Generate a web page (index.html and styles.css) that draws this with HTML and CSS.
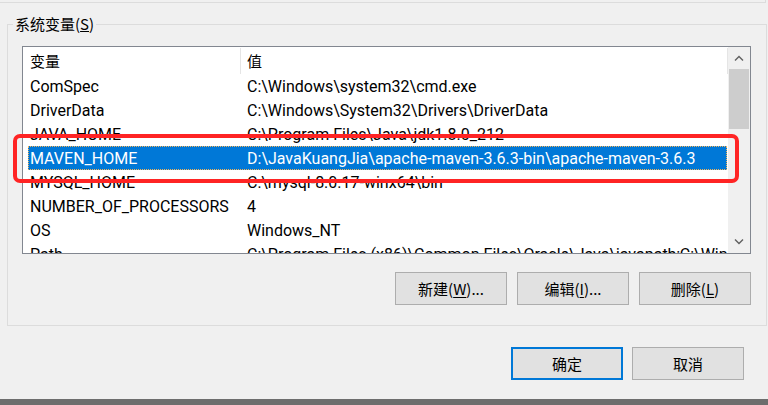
FILE: index.html
```html
<!DOCTYPE html>
<html lang="zh-CN">
<head>
<meta charset="utf-8">
<link rel="stylesheet" href="styles.css">
</head>
<body>
<div class="prev-group"></div>
<fieldset class="group">
  <legend>系统变量(<u>S</u>)</legend>
  <div class="listview">
    <div class="lv-main">
      <div class="lv-header">
        <div class="hc hc1">变量</div>
        <div class="hc hc2">值</div>
      </div>
      <div class="row"><span class="c1">ComSpec</span><span class="c2">C:\Windows\system32\cmd.exe</span></div>
      <div class="row"><span class="c1">DriverData</span><span class="c2">C:\Windows\System32\Drivers\DriverData</span></div>
      <div class="row"><span class="c1">JAVA_HOME</span><span class="c2">C:\Program Files\Java\jdk1.8.0_212</span></div>
      <div class="row selected"><span class="c1">MAVEN_HOME</span><span class="c2">D:\JavaKuangJia\apache-maven-3.6.3-bin\apache-maven-3.6.3</span></div>
      <div class="row"><span class="c1">MYSQL_HOME</span><span class="c2">C:\mysql-8.0.17-winx64\bin</span></div>
      <div class="row"><span class="c1">NUMBER_OF_PROCESSORS</span><span class="c2">4</span></div>
      <div class="row"><span class="c1">OS</span><span class="c2">Windows_NT</span></div>
      <div class="row"><span class="c1">Path</span><span class="c2">C:\Program Files (x86)\Common Files\Oracle\Java\javapath;C:\Windows\system32</span></div>
    </div>
    <div class="scrollbar">
      <div class="sb-arrow">
        <svg width="10" height="6" viewBox="0 0 10 6"><path d="M1 5.5 L5 1.5 L9 5.5" fill="none" stroke="#606060" stroke-width="1.4"/></svg>
      </div>
      <div class="sb-track"><div class="sb-thumb"></div></div>
      <div class="sb-arrow">
        <svg width="10" height="6" viewBox="0 0 10 6"><path d="M1 0.5 L5 4.5 L9 0.5" fill="none" stroke="#606060" stroke-width="1.4"/></svg>
      </div>
    </div>
  </div>
  <div class="btn-row">
    <button class="btn">新建(<u>W</u>)...</button>
    <button class="btn">编辑(<u>I</u>)...</button>
    <button class="btn">删除(<u>L</u>)</button>
  </div>
</fieldset>
<div class="dialog-btns">
  <button class="btn default">确定</button>
  <button class="btn">取消</button>
</div>
<div class="bottom-rule"></div>
<div class="highlight"></div>
</body>
</html>
```
FILE: styles.css
```css
html, body {
  margin: 0;
  padding: 0;
}
body {
  width: 768px;
  height: 405px;
  overflow: hidden;
  background: #f0f0f0;
  font-family: "Roboto", "Noto Sans CJK SC", sans-serif;
  font-size: 15px;
  color: #000;
  position: relative;
}
.prev-group {
  width: 765px;
  height: 2px;
  border-right: 1px solid #dcdcdc;
  border-bottom: 1px solid #dcdcdc;
}
.group {
  box-sizing: border-box;
  width: 760px;
  margin: 11px 0 0 7px;
  padding: 12px 15px 20px 14px;
  border: 1px solid #dcdcdc;
  min-width: 0;
}
.group legend {
  margin-left: -9px;
  padding: 0 2px;
  line-height: 20px;
  font-family: "Noto Sans CJK SC", sans-serif;
}
.listview {
  box-sizing: border-box;
  height: 208px;
  border: 1px solid #828790;
  background: #fff;
  display: flex;
  overflow: hidden;
}
.lv-main {
  width: 705px;
  overflow: hidden;
}
.lv-header {
  display: flex;
  height: 27px;
}
.hc {
  box-sizing: border-box;
  height: 26px;
  margin-top: 1px;
  line-height: 26px;
  font-family: "Noto Sans CJK SC", sans-serif;
  border-right: 1px solid #e5e5e5;
}
.hc1 {
  width: 218px;
  padding-left: 7px;
}
.hc2 {
  width: 487px;
  padding-left: 6px;
}
.row {
  display: flex;
  height: 24px;
  line-height: 25px;
  width: 699px;
  margin-left: 5px;
  white-space: nowrap;
  overflow: hidden;
  font-size: 16px;
}
.row .c1 {
  box-sizing: border-box;
  flex: 0 0 212px;
  padding-left: 2px;
}
.row .c2 {
  padding-left: 7px;
}
.row.selected {
  background: #0078d7;
  color: #fff;
  outline: 1px dotted #f3b35a;
  outline-offset: -1px;
}
.scrollbar {
  width: 22px;
  background: #f0f0f0;
  display: flex;
  flex-direction: column;
}
.sb-arrow {
  height: 22px;
  display: flex;
  align-items: center;
  justify-content: center;
}
.sb-track {
  flex: 1;
}
.sb-thumb {
  height: 60px;
  margin: 0 1px;
  background: #cdcdcd;
}
.btn-row {
  display: flex;
  justify-content: flex-end;
  gap: 10px;
  margin-top: 18px;
}
.btn {
  box-sizing: border-box;
  width: 112px;
  height: 33px;
  background: #e1e1e1;
  border: 1px solid #adadad;
  border-radius: 0;
  font-family: "Noto Sans CJK SC", sans-serif;
  font-size: 15px;
  color: #000;
  padding: 0;
  margin: 0;
}
.btn u {
  text-underline-offset: 2px;
}
.btn.default {
  border: 2px solid #0078d7;
}
.dialog-btns {
  display: flex;
  justify-content: flex-end;
  gap: 9px;
  margin-top: 21px;
  padding-right: 24px;
}
.bottom-rule {
  margin-top: 19px;
  height: 6px;
  background: #6d6d6d;
}
.highlight {
  position: absolute;
  left: 13px;
  top: 134px;
  width: 726px;
  height: 49px;
  box-sizing: border-box;
  border: 4px solid #ff2424;
  border-radius: 7px;
}
```
